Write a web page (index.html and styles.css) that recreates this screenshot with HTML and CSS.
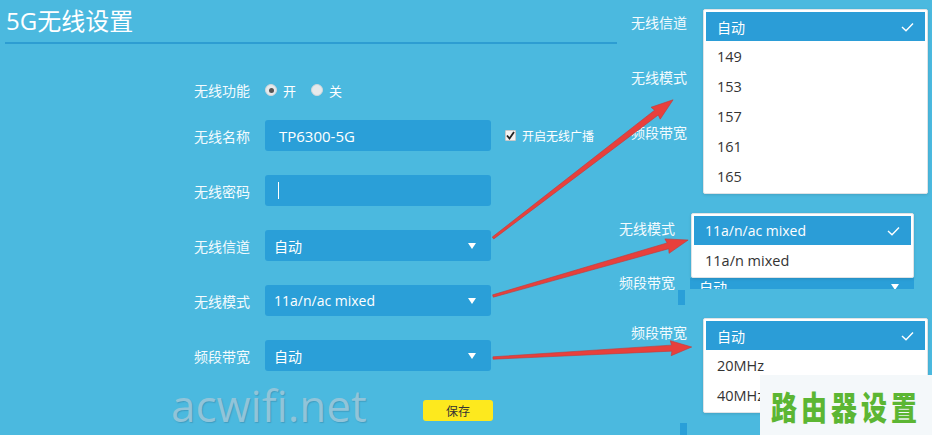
FILE: index.html
```html
<!DOCTYPE html>
<html lang="zh-CN">
<head>
<meta charset="utf-8">
<title>5G无线设置</title>
<link rel="stylesheet" href="styles.css">
</head>
<body>
<div class="page">
  <section class="main">
    <h1 class="title">5G无线设置</h1>
    <div class="form">
      <div class="row row--radio">
        <span class="label">无线功能</span>
        <span class="radio radio--on"></span><span class="radio-text">开</span>
        <span class="radio"></span><span class="radio-text">关</span>
      </div>
      <div class="row">
        <span class="label">无线名称</span>
        <span class="field field--input">TP6300-5G</span>
        <span class="check"><svg width="9" height="9" viewBox="0 0 9 9"><polyline points="1,4.5 3.5,7.5 8,1" fill="none" stroke="#222" stroke-width="1.8"/></svg></span>
        <span class="check-text">开启无线广播</span>
      </div>
      <div class="row">
        <span class="label">无线密码</span>
        <span class="field field--input"><span class="caret"></span></span>
      </div>
      <div class="row">
        <span class="label">无线信道</span>
        <span class="field field--select">自动<span class="tri"></span></span>
      </div>
      <div class="row">
        <span class="label">无线模式</span>
        <span class="field field--select">11a/n/ac mixed<span class="tri"></span></span>
      </div>
      <div class="row">
        <span class="label">频段带宽</span>
        <span class="field field--select">自动<span class="tri"></span></span>
      </div>
      <div class="row row--save">
        <span class="label"></span>
        <span class="save">保存</span>
      </div>
    </div>
  </section>

  <aside class="snips">
    <div class="snip snip--one">
      <div class="labels labels--one">
        <span class="slabel">无线信道</span>
        <span class="slabel">无线模式</span>
        <span class="slabel">频段带宽</span>
      </div>
      <div class="dropdown dropdown--one">
        <div class="dd-head">自动<svg class="tick" width="13" height="10" viewBox="0 0 13 10"><polyline points="1,5 5,8.8 12,1.5" fill="none" stroke="#fff" stroke-width="1.4"/></svg></div>
        <div class="dd-item">149</div>
        <div class="dd-item">153</div>
        <div class="dd-item">157</div>
        <div class="dd-item">161</div>
        <div class="dd-item">165</div>
      </div>
    </div>
    <div class="snip snip--two">
      <div class="labels labels--two">
        <span class="slabel">无线模式</span>
        <span class="slabel slabel--low">频段带宽</span>
        <span class="bar bar--two"></span>
      </div>
      <div class="dd-col">
        <div class="dropdown dropdown--two">
          <div class="dd-head">11a/n/ac mixed<svg class="tick" width="13" height="10" viewBox="0 0 13 10"><polyline points="1,5 5,8.8 12,1.5" fill="none" stroke="#fff" stroke-width="1.4"/></svg></div>
          <div class="dd-item">11a/n mixed</div>
        </div>
        <div class="peek"><span class="field field--select field--peek">自动<span class="tri"></span></span></div>
      </div>
    </div>
    <div class="snip snip--three">
      <div class="labels labels--three">
        <span class="slabel">频段带宽</span>
        <span class="bar bar--three"></span>
      </div>
      <div class="dropdown dropdown--three">
        <div class="dd-head">自动<svg class="tick" width="13" height="10" viewBox="0 0 13 10"><polyline points="1,5 5,8.8 12,1.5" fill="none" stroke="#fff" stroke-width="1.4"/></svg></div>
        <div class="dd-item">20MHz</div>
        <div class="dd-item">40MHz</div>
      </div>
    </div>
  </aside>

  <div class="watermark">acwifi.net</div>

  <svg class="arrows" width="932" height="435" viewBox="0 0 932 435">
    <g fill="#e8403c" stroke="#c23b3b" stroke-width="0.6">
      <polygon transform="translate(493,238) rotate(-37.5)" points="0,-1.2 206,-3 205,-7.5 227,0 205,7.5 206,3 0,1.2"/>
      <polygon transform="translate(493,296) rotate(-16)" points="0,-1.2 182,-3 181,-7.5 203,0 181,7.5 182,3 0,1.2"/>
      <polygon transform="translate(493,358) rotate(-3.16)" points="0,-1.2 179,-3 178,-7.5 199,0 178,7.5 179,3 0,1.2"/>
    </g>
  </svg>

  <div class="stamp"><span class="stamp-text">路由器设置</span></div>
</div>
</body>
</html>
```

FILE: styles.css
```css
* { box-sizing: border-box; }

html, body {
  margin: 0;
  padding: 0;
}

body {
  background: #4bb9df;
  font-family: "Open Sans", "Noto Sans CJK SC", sans-serif;
  color: #fff;
}

.page {
  position: relative;
  width: 932px;
  height: 435px;
  overflow: hidden;
  display: flex;
  background: #4bb9df;
}

/* ---------- main settings panel ---------- */
.main {
  width: 612px;
  margin-left: 5px;
  flex: none;
}

.title {
  margin: 0;
  height: 44px;
  padding: 5px 0 0 1px;
  font-size: 24px;
  line-height: 32px;
  font-weight: normal;
  color: #fff;
  border-bottom: 2px solid #2d9dd2;
}

.form {
  display: flex;
  flex-direction: column;
  gap: 24px;
  margin-left: 189px;
  padding-top: 36px;
}

.row {
  display: flex;
  align-items: center;
  height: 31px;
}

.row--radio {
  height: 20px;
  margin-bottom: -4px;
}

.row--save {
  height: 21px;
  margin-top: 5px;
}

.label {
  width: 71px;
  flex: none;
  font-family: "Noto Sans CJK SC", sans-serif;
  font-size: 14px;
  color: #f4fbfe;
}

.radio {
  width: 12px;
  height: 12px;
  border-radius: 50%;
  background: #e6e9eb;
  border: 1px solid #cfd6da;
  display: flex;
  align-items: center;
  justify-content: center;
}

.radio--on::after {
  content: "";
  width: 5px;
  height: 5px;
  border-radius: 50%;
  background: #555;
}

.radio-text {
  font-family: "Noto Sans CJK SC", sans-serif;
  font-size: 13px;
  margin-left: 6px;
  margin-right: 15px;
}

.field {
  width: 226px;
  height: 31px;
  flex: none;
  display: flex;
  align-items: center;
  background: #2a9fd8;
  border-radius: 3px;
  color: #fff;
  position: relative;
}

.field--input {
  padding-left: 14px;
  font-size: 15px;
}

.field--select {
  padding-left: 9px;
  font-size: 14px;
}

.caret {
  width: 1px;
  height: 17px;
  background: #fff;
  margin-left: -1px;
}

.tri {
  position: absolute;
  right: 15px;
  top: 13px;
  width: 0;
  height: 0;
  border-left: 4.5px solid transparent;
  border-right: 4.5px solid transparent;
  border-top: 6px solid #fff;
}

.check {
  width: 11px;
  height: 11px;
  margin-left: 14px;
  background: #f2f2f2;
  border: 1px solid #c9c9c9;
  border-radius: 1px;
  display: flex;
  align-items: center;
  justify-content: center;
}

.check-text {
  font-family: "Noto Sans CJK SC", sans-serif;
  font-size: 12px;
  margin-left: 6px;
}

.save {
  margin-left: 158px;
  width: 70px;
  height: 21px;
  background: #fde91e;
  border-radius: 3px;
  color: #333;
  font-family: "Noto Sans CJK SC", sans-serif;
  font-size: 12px;
  display: flex;
  align-items: center;
  justify-content: center;
}

/* ---------- pasted dropdown snippets ---------- */
.snips {
  width: 315px;
  flex: none;
  display: flex;
  flex-direction: column;
}

.snip {
  display: flex;
  align-items: flex-start;
}

.snip--one { height: 200px; }
.snip--two { height: 118px; }
.snip--three { height: 117px; }

.labels {
  display: flex;
  flex-direction: column;
  flex: none;
}

.slabel {
  font-family: "Noto Sans CJK SC", sans-serif;
  font-size: 14px;
  line-height: 16px;
  color: #f4fbfe;
}

.labels--one {
  width: 86px;
  padding: 14px 0 0 14px;
  gap: 39px;
}

.labels--two {
  width: 73px;
  padding: 20px 0 0 2px;
}

.slabel--low { margin-top: 38px; }

.labels--three {
  width: 86px;
  padding: 6px 0 0 14px;
}

.bar {
  width: 7px;
  background: #2a9fd8;
}

.bar--two {
  height: 15px;
  margin-left: 59px;
}

.bar--three {
  height: 12px;
  margin-left: 49px;
  margin-top: 83px;
}

.dropdown {
  background: #fff;
  border: 1px solid #dfe3e6;
  border-radius: 2px;
  padding: 2px;
  box-shadow: 0 1px 3px rgba(0, 0, 0, 0.12);
}

.dropdown--one {
  width: 225px;
  margin-top: 9px;
}

.dropdown--three {
  width: 225px;
}

.dd-col {
  display: flex;
  flex-direction: column;
}

.dropdown--two {
  width: 223px;
  margin-top: 13px;
  margin-left: 1px;
  position: relative;
  z-index: 1;
}

.dd-head {
  height: 29px;
  background: #2b9dd7;
  color: #fff;
  font-size: 14px;
  padding: 0 11px 0 11px;
  display: flex;
  align-items: center;
  justify-content: space-between;
}

.dd-item {
  height: 30px;
  padding-left: 11px;
  display: flex;
  align-items: center;
  font-size: 14.5px;
  color: #333;
}

.peek {
  height: 11px;
  overflow: hidden;
}

.field--peek {
  width: 224px;
  margin-top: -7px;
}

/* ---------- overlays ---------- */
.watermark {
  position: absolute;
  left: 171px;
  top: 375px;
  font-family: "Open Sans", sans-serif;
  font-size: 44px;
  color: #91c4d9;
  text-shadow: 1px 1px 1px rgba(40, 110, 140, 0.35);
}

.arrows {
  position: absolute;
  left: 0;
  top: 0;
  pointer-events: none;
}

.stamp {
  position: absolute;
  left: 760px;
  top: 375px;
  width: 172px;
  height: 60px;
  background: #f4f8fa;
  display: flex;
  align-items: center;
  justify-content: center;
}

.stamp-text {
  display: inline-block;
  font-family: "Noto Sans CJK SC", sans-serif;
  font-weight: 900;
  font-size: 26px;
  letter-spacing: 4px;
  color: #5cb633;
  transform: scaleY(1.25);
}
```
